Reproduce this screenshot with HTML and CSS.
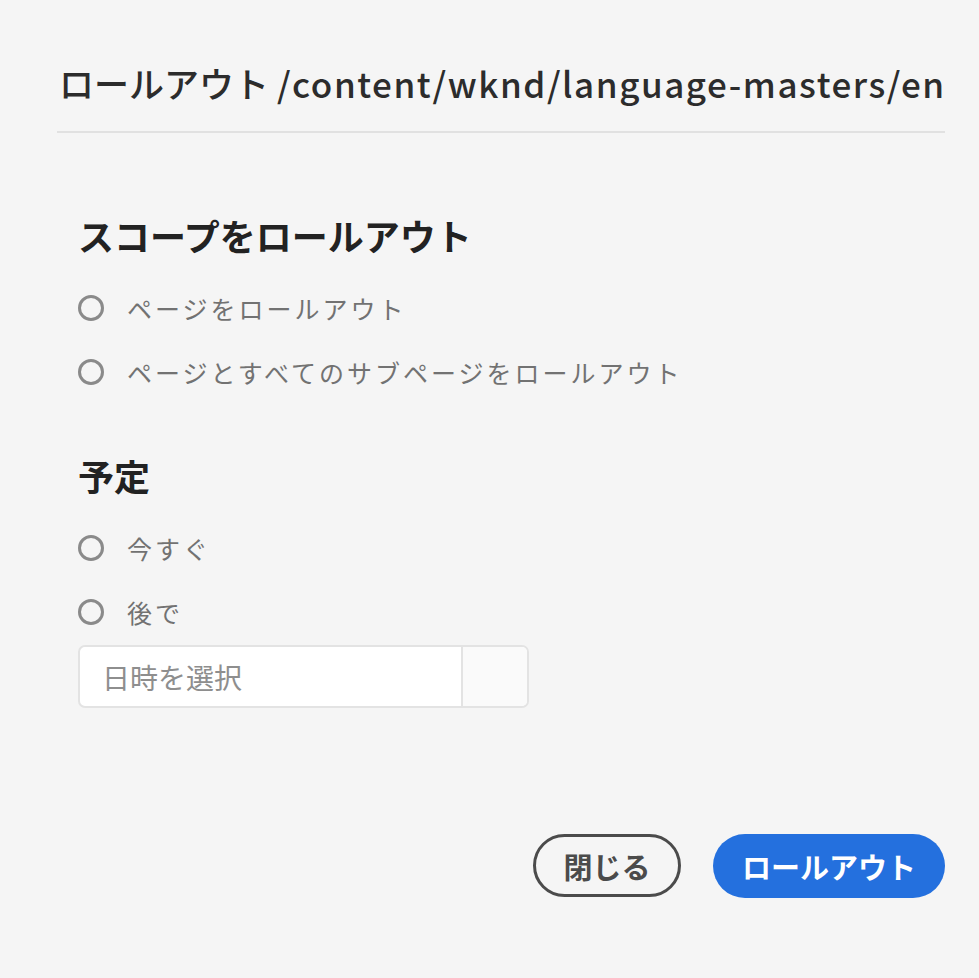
FILE: index.html
```html
<!DOCTYPE html>
<html lang="ja">
<head>
<meta charset="utf-8">
<title>ロールアウト</title>
<link rel="stylesheet" href="styles.css">
</head>
<body>
<div class="dialog">
  <h1 class="title">ロールアウト <span class="title-path">/content/wknd/language-masters/en</span></h1>
  <div class="divider"></div>
  <div class="body">
    <h2 class="section-heading">スコープをロールアウト</h2>
    <div class="radio-group">
      <label class="radio"><span class="radio-circle"></span><span class="radio-label">ページをロールアウト</span></label>
      <label class="radio"><span class="radio-circle"></span><span class="radio-label">ページとすべてのサブページをロールアウト</span></label>
    </div>
    <h2 class="section-heading section-heading-second">予定</h2>
    <div class="radio-group">
      <label class="radio"><span class="radio-circle"></span><span class="radio-label">今すぐ</span></label>
      <label class="radio"><span class="radio-circle"></span><span class="radio-label">後で</span></label>
    </div>
    <div class="datepicker">
      <div class="datepicker-input">日時を選択</div>
      <div class="datepicker-button"></div>
    </div>
  </div>
  <div class="actions">
    <button class="btn btn-secondary">閉じる</button>
    <button class="btn btn-primary">ロールアウト</button>
  </div>
</div>
</body>
</html>
```

FILE: styles.css
```css
* { box-sizing: border-box; }
html, body {
  margin: 0;
  padding: 0;
  background: #f5f5f5;
}
body {
  font-family: "Noto Sans CJK JP", "Noto Sans", sans-serif;
  width: 979px;
  height: 978px;
  overflow: hidden;
}
.dialog {
  padding: 60px 34px 0 57px;
  display: flex;
  flex-direction: column;
}
.title {
  margin: 0;
  padding-left: 2px;
  font-size: 35px;
  line-height: 45px;
  font-weight: 500;
  color: #2c2c2c;
  white-space: nowrap;
}
.title-path {
  letter-spacing: 1.55px;
}
.divider {
  margin-top: 26px;
  height: 2px;
  background: #e1e1e1;
}
.body {
  padding-left: 21px;
  display: flex;
  flex-direction: column;
}
.section-heading {
  margin: 79px 0 0 0;
  font-size: 36px;
  line-height: 46px;
  font-weight: 700;
  color: #222;
}
.section-heading-second {
  margin-top: 56px;
}
.radio-group {
  margin-top: 26px;
  display: flex;
  flex-direction: column;
  gap: 16px;
}
.radio {
  display: flex;
  align-items: center;
  height: 48px;
}
.radio-circle {
  width: 26px;
  height: 26px;
  border: 3px solid #8a8a8a;
  border-radius: 50%;
  flex: none;
}
.radio-label {
  margin-left: 23px;
  font-size: 25px;
  letter-spacing: 3px;
  color: #727272;
}
.datepicker {
  margin-top: 9px;
  width: 451px;
  height: 63px;
  display: flex;
  border: 2px solid #e3e3e3;
  border-radius: 7px;
  background: #fff;
  overflow: hidden;
}
.datepicker-input {
  flex: 1;
  display: flex;
  align-items: center;
  padding-left: 22px;
  font-size: 28px;
  color: #8e8e8e;
}
.datepicker-button {
  width: 66px;
  border-left: 2px solid #e3e3e3;
  background: #fafafa;
}
.actions {
  margin-top: 126px;
  display: flex;
  justify-content: flex-end;
  gap: 32px;
}
.btn {
  font-family: "Noto Sans CJK JP", "Noto Sans", sans-serif;
  font-weight: 700;
  font-size: 29px;
  height: 63px;
  border-radius: 32px;
  padding: 0;
  cursor: pointer;
}
.btn-secondary {
  width: 148px;
  background: transparent;
  border: 3px solid #4b4b4b;
  color: #4b4b4b;
}
.btn-primary {
  width: 232px;
  height: 64px;
  background: #2470de;
  border: none;
  color: #fff;
}
```
